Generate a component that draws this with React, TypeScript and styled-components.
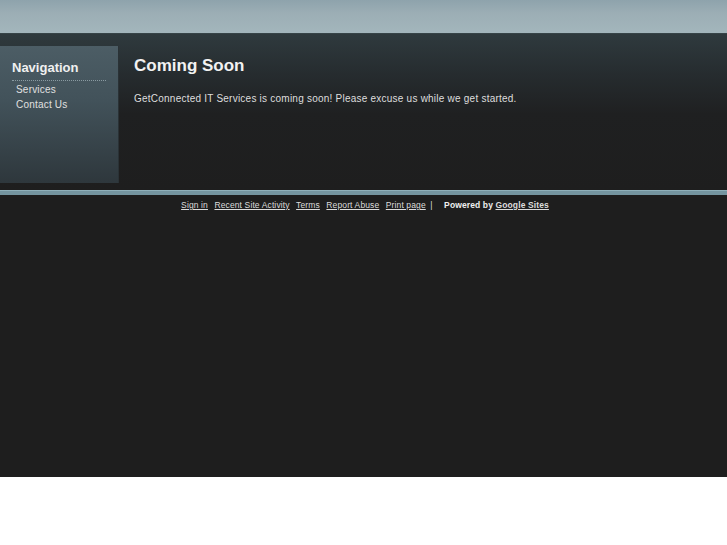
import React from 'react'
import styled, { createGlobalStyle } from 'styled-components'

const GlobalStyle = createGlobalStyle`
  html, body {
    margin: 0;
    padding: 0;
    background: #ffffff;
  }
  body {
    font-family: "Liberation Sans", Arial, sans-serif;
  }
`

const Page = styled.div`
  height: 477px;
  background: #1e1e1e;
  display: flex;
  flex-direction: column;
`

const Header = styled.div`
  height: 33px;
  background: linear-gradient(to bottom, #8ea3ac 0%, #9caeb5 40%, #a3b6bc 100%);
  border-bottom: 1px solid #374448;
`

const Main = styled.div`
  display: flex;
  align-items: flex-start;
  box-sizing: border-box;
  padding-top: 12px;
  height: 156px;
  background: linear-gradient(to bottom, #2f3a3e 0px, #262c2f 40px, #1f2021 80px, #1e1e1e 100%);
`

const Sidebar = styled.nav`
  width: 119px;
  height: 137px;
  box-sizing: border-box;
  padding: 14px 12px 0 12px;
  background: linear-gradient(to bottom, #4c5d65 0%, #42525a 40%, #2e373c 100%);
  border-right: 1px solid #2a3236;
`

const NavTitle = styled.h2`
  margin: 0;
  padding-bottom: 5px;
  font-size: 13px;
  font-weight: bold;
  color: #f0f0f0;
  border-bottom: 1px dotted #8a9aa1;
`

const NavList = styled.ul`
  list-style: none;
  margin: 1px 0 0 0;
  padding: 0 0 0 4px;
`

const NavItem = styled.li`
  font-size: 10px;
  line-height: 15px;
  color: #e0e0e0;
  letter-spacing: 0.2px;
`

const Content = styled.main`
  padding: 10px 0 0 15px;
`

const Title = styled.h1`
  margin: 0;
  font-size: 17px;
  font-weight: bold;
  color: #f2f2f2;
`

const Text = styled.p`
  margin: 17px 0 0 0;
  font-size: 10px;
  color: #dedede;
  letter-spacing: 0.23px;
`

const Separator = styled.div`
  height: 4px;
  background: #7595a0;
  border-top: 1px solid #8fb0ba;
`

const Footer = styled.div`
  display: flex;
  justify-content: center;
  align-items: center;
  gap: 6.5px;
  padding-top: 5px;
  padding-left: 3px;
  font-size: 8.5px;
  letter-spacing: 0.12px;
  color: #dcdcdc;
`

const FooterLink = styled.a`
  color: #dcdcdc;
  text-decoration: underline;
`

const Pipe = styled.span`
  margin-left: -2px;
  margin-right: 5px;
`

const Powered = styled.span`
  font-weight: bold;
  color: #f0f0f0;
`

const links = ['Sign in', 'Recent Site Activity', 'Terms', 'Report Abuse', 'Print page']

export default function App() {
  return (
    <>
      <GlobalStyle />
      <Page>
        <Header />
        <Main>
          <Sidebar>
            <NavTitle>Navigation</NavTitle>
            <NavList>
              <NavItem>Services</NavItem>
              <NavItem>Contact Us</NavItem>
            </NavList>
          </Sidebar>
          <Content>
            <Title>Coming Soon</Title>
            <Text>GetConnected IT Services is coming soon! Please excuse us while we get started.</Text>
          </Content>
        </Main>
        <Separator />
        <Footer>
          {links.map(l => (
            <FooterLink key={l} href="#">{l}</FooterLink>
          ))}
          <Pipe>|</Pipe>
          <Powered>
            Powered by <FooterLink href="#">Google Sites</FooterLink>
          </Powered>
        </Footer>
      </Page>
    </>
  )
}
